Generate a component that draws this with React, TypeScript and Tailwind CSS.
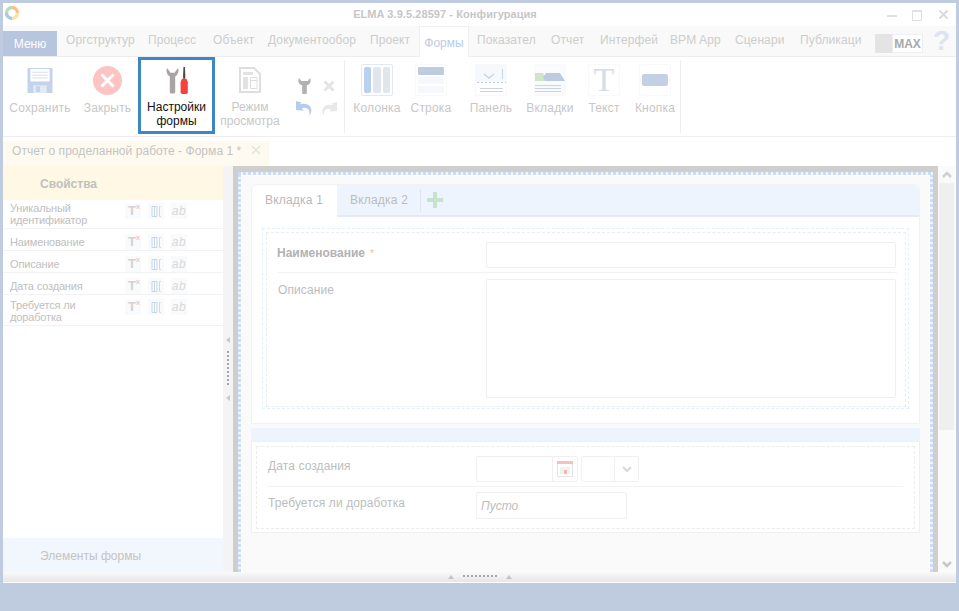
import React from "react";

const FONT = "[font-family:'Liberation_Sans',Arial,sans-serif]";

function Logo() {
  return (
    <svg width="16" height="18" viewBox="0 0 16 18" className="mt-[1px] ml-[1px]">
      <path d="M8 3.500A5.500 5.500 0 0 1 13.500 9" fill="none" stroke="#f7c28e" strokeWidth="3.400" />
      <path d="M13.500 9A5.500 5.500 0 0 1 8 14.500" fill="none" stroke="#f5e6a2" strokeWidth="3.400" />
      <path d="M8 14.500A5.500 5.500 0 0 1 2.500 9" fill="none" stroke="#a9c8ee" strokeWidth="3.400" />
      <path d="M2.500 9A5.500 5.500 0 0 1 8 3.500" fill="none" stroke="#b5e0b0" strokeWidth="3.400" />
    </svg>
  );
}

function TopTab({ label, w }: { label: string; w: string }) {
  return <div className={`${w} shrink-0 pt-[7px] text-[12px] leading-[14px] text-[#cdcdcd] tracking-[0.1px]`}>{label}</div>;
}

function Floppy() {
  return (
    <svg width="26" height="25" viewBox="0 0 26 26">
      <path d="M0 0h26v26H0z" fill="#c3d3e9" />
      <path d="M3 1h20v13H3z" fill="#fff" />
      <path d="M5 4h16v1H5zM5 7h16v1H5zM5 10h16v1H5z" fill="#d6e0ee" />
      <path d="M6 18h14v8H6z" fill="#e4eaf3" />
      <path d="M9 19h4v6H9z" fill="#c3d3e9" />
    </svg>
  );
}

function CloseRound() {
  return (
    <svg width="29" height="29" viewBox="0 0 29 29">
      <circle cx="14.500" cy="14.500" r="14.500" fill="#fcc5c3" />
      <path d="M8.500 8.500l12 12M20.500 8.500l-12 12" stroke="#fff" strokeWidth="3" />
    </svg>
  );
}

function Tools() {
  return (
    <svg width="22" height="27" viewBox="0 0 24 30">
      <path d="M1 1.500C0 3 0 7 2.500 9.500L4 10.500V28a1.500 1.500 0 0 0 1.500 1.500h3A1.500 1.500 0 0 0 10 28V10.500l1.500-1C14 7 14 3 13 1.500L10.500 4.500 9.500 6.500h-5L3.500 4.500z" fill="#a8a4a3" />
      <path d="M19.200 0h1.600l.4 8.500V13h-2.400V8.500z" fill="#4a4644" />
      <path d="M17.500 13h5L24 17v11a2 2 0 0 1-2 2h-4a2 2 0 0 1-2-2V17z" fill="#f4433a" />
    </svg>
  );
}

function DocView() {
  return (
    <svg width="22" height="26" viewBox="0 0 22 26">
      <path d="M1 1h14l6 6v18H1z" fill="#fff" stroke="#dedede" strokeWidth="2" />
      <path d="M4 5h10v3H4zM4 10h5v12H4z" fill="#e2e2e2" />
      <path d="M11.500 10.500h6.500v11h-6.500zM11.500 13.500h6.500" fill="none" stroke="#dedede" />
    </svg>
  );
}

function RibbonBtn({ w, label, icon }: { w: string; label: string; icon: React.ReactNode }) {
  return (
    <div className={`${w} shrink-0 flex flex-col items-center`}>
      <div className="h-[32px] mt-[7px] flex items-center justify-center">{icon}</div>
      <div className="mt-[5px] text-[12px] leading-[14px] text-center text-[#c7c7c7] tracking-[0.2px] whitespace-pre">{label}</div>
    </div>
  );
}

function Tile({ children, active }: { children: React.ReactNode; active?: boolean }) {
  return (
    <div className={`w-[32px] h-[32px] rounded-[2px] border ${active ? "border-[#dfe8f4]" : "border-[#f8f9fb]"} flex flex-col items-stretch`}>
      {children}
    </div>
  );
}

function Sep() {
  return <div className="w-[1px] h-[73px] mt-[3px] bg-[#eeeeee] shrink-0" />;
}

function SmallIcons() {
  return (
    <div className="w-[59px] shrink-0 pt-[17px] pl-[7px] grid grid-cols-[24px_26px] grid-rows-[23px_23px] items-center justify-items-center">
      <svg width="13" height="16" viewBox="0 0 14 17">
        <path d="M1 0C0 2 0 5 2 6.500L4.500 8v8a1 1 0 0 0 1 1h3a1 1 0 0 0 1-1V8L12 6.500C14 5 14 2 13 0L10.500 3h-7z" fill="#b2b0b0" />
      </svg>
      <svg width="12" height="12" viewBox="0 0 12 12">
        <path d="M1.500 1.500l9 9M10.500 1.500l-9 9" stroke="#e4e4e4" strokeWidth="3" />
      </svg>
      <svg width="16" height="15" viewBox="0 0 16 15">
        <path d="M0 0l5.500 1.500-1.500 1.800C7 2.300 10 2.500 12.500 4 16 6.500 16.500 11 13 15c1-3.500.5-6-2-7.500-2-1-4-1-5 .5l2 1.800L0 9z" fill="#b5cdea" />
      </svg>
      <svg width="15" height="14" viewBox="0 0 15 14">
        <path d="M15 0l-5.500 1.500 1.500 1.800C8 2.300 5 2.500 3 4 0 6.500-.5 10 2 14c-.5-3-.1-5 2-6.500 2-1 4-1 5 .5l-2 1.800L15 9z" fill="#e8e8e8" />
      </svg>
    </div>
  );
}

function RowIcons({ top }: { top: string }) {
  return (
    <div className={`absolute left-[122px] ${top} flex gap-[7px]`}>
      <div className="w-[16px] h-[16px] bg-[#f9fafc] relative">
        <span className="absolute left-[3px] top-0 text-[13px] leading-[16px] font-bold text-[#d3d3d3]">T</span>
        <span className="absolute left-[11px] -top-[1px] text-[8px] leading-[10px] text-[#f5b5b5]">x</span>
      </div>
      <div className="w-[16px] h-[16px] bg-[#f9fafc] flex items-center justify-center">
        <svg width="11" height="11" viewBox="0 0 11 11">
          <path d="M1 .5h5v10H1zM3.500 .5v10" fill="none" stroke="#c8d6ea" />
          <path d="M10 .5H8.500v10H10" fill="none" stroke="#d8d8d8" />
        </svg>
      </div>
      <div className="w-[16px] h-[16px] bg-[#f9fafc] flex items-center justify-center italic text-[12px] leading-[16px] text-[#d9d9d9] tracking-[0.5px]">ab</div>
    </div>
  );
}

function SideRow({ label, h, pt, top }: { label: string; h: string; pt: string; top: string }) {
  return (
    <div className={`${h} ${pt} relative border-b border-[#f2f2f2] pl-[7px] text-[11px] leading-[12px] tracking-[-0.15px] text-[#c0c0c0] whitespace-pre`}>
      {label}
      <RowIcons top={top} />
    </div>
  );
}

function Input({ className = "", children }: { className?: string; children?: React.ReactNode }) {
  return <div className={`border border-[#f0f0f0] rounded-[2px] bg-white ${className}`}>{children}</div>;
}

export default function App() {
  return (
    <div className={`w-[959px] h-[611px] bg-[#bfcbdf] overflow-hidden pt-[3px] pl-[3px] pr-[3px] ${FONT}`}>
      <div className="h-[580px] bg-white flex flex-col">
        {/* title */}
        <div className="h-[23px] shrink-0 relative flex items-center justify-center">
          <div className="absolute left-0 top-0"><Logo /></div>
          <div className="text-[11px] font-bold text-[#c6c6c6] tracking-[0.07px] pr-[69px]">ELMA 3.9.5.28597 - Конфигурация</div>
          <div className="absolute left-[884px] top-0 h-[23px] flex items-center">
            <div className="w-[10px] h-[2px] mt-[2px] bg-[#e0e0e0]" />
            <div className="w-[10px] h-[11px] ml-[15px] mt-[1px] border border-t-2 border-[#e0e0e0]" />
            <svg width="12" height="12" viewBox="0 0 12 12" className="ml-[16px]"><path d="M1.500 1.500l8 8M9.500 1.500l-8 8" stroke="#d9d9d9" strokeWidth="1.800" /></svg>
          </div>
        </div>
        {/* tabs */}
        <div className="h-[31px] shrink-0 bg-[#f9f9f9] border-b border-[#ededed] flex relative">
          <div className="w-[54px] h-[25px] mt-[5px] bg-[#b7c6de] text-white text-[12px] leading-[26px] text-center shrink-0">Меню</div>
          <div className="w-[9px] shrink-0" />
          <TopTab label="Оргструктур" w="w-[82px]" />
          <TopTab label="Процесс" w="w-[65px]" />
          <TopTab label="Объект" w="w-[55px]" />
          <TopTab label="Документообор" w="w-[102px]" />
          <TopTab label="Проект" w="w-[49px]" />
          <div className="w-[50px] h-[31px] shrink-0 bg-white border-x border-t border-[#efefef] text-center pt-[9px] text-[12px] leading-[14px] text-[#bccce2]">Формы</div>
          <div className="w-[8px] shrink-0" />
          <TopTab label="Показател" w="w-[74px]" />
          <TopTab label="Отчет" w="w-[49px]" />
          <TopTab label="Интерфей" w="w-[70px]" />
          <TopTab label="BPM App" w="w-[65px]" />
          <TopTab label="Сценари" w="w-[65px]" />
          <TopTab label="Публикаци" w="w-[75px]" />
          <div className="w-[48px] h-[19px] mt-[8px] shrink-0 bg-[#e4e4e4] flex justify-end">
            <div className="w-[31px] h-[19px] bg-white border border-[#eeeeee] text-[12px] leading-[19px] font-bold text-center text-[#a9a9a9]">MAX</div>
          </div>
          <div className="ml-[10px] mt-[0px] text-[28px] leading-[30px] font-bold text-[#dbe4f0]">?</div>
        </div>
        {/* ribbon */}
        <div className="h-[80px] shrink-0 border-b border-[#eeeeee] flex">
          <RibbonBtn w="w-[74px]" label="Сохранить" icon={<Floppy />} />
          <RibbonBtn w="w-[61px]" label="Закрыть" icon={<CloseRound />} />
          <div className="w-[77px] h-[77px] shrink-0 border-[3px] border-[#3f86c4] flex flex-col items-center">
            <div className="mt-[7px] h-[29px]"><Tools /></div>
            <div className="mt-[4px] text-[12px] leading-[14px] text-center text-[#111]">Настройки<br />формы</div>
          </div>
          <div className="w-[70px] shrink-0 flex flex-col items-center">
            <div className="h-[32px] mt-[7px] flex items-center justify-center"><DocView /></div>
            <div className="mt-[4px] text-[12px] leading-[14px] text-center text-[#c7c7c7]">Режим<br />просмотра</div>
          </div>
          <SmallIcons />
          <Sep />
          <div className="w-[4px] shrink-0" />
          <RibbonBtn w="w-[56px]" label="Колонка" icon={
            <Tile active>
              <div className="flex gap-[2px] h-full p-[2px]">
                <div className="flex-1 rounded-[2px] bg-[#b9d0f0]" />
                <div className="flex-1 rounded-[2px] bg-[#e1e6ec]" />
                <div className="flex-1 rounded-[2px] bg-[#e1e6ec]" />
              </div>
            </Tile>} />
          <RibbonBtn w="w-[52px]" label="Строка" icon={
            <Tile>
              <div className="h-full flex flex-col gap-[1px] p-[2px]">
                <div className="h-[8px] rounded-[1px] bg-[#bfcce0]" />
                <div className="h-[7px] mt-[1px] bg-[#f5f8fc]" />
                <div className="h-[7px] mt-[1px] bg-[#f5f8fc]" />
              </div>
            </Tile>} />
          <RibbonBtn w="w-[68px]" label="Панель" icon={
            <Tile>
              <svg width="30" height="30" viewBox="0 0 30 30">
                <path d="M0 0h30v17H0z" fill="#f5f8fc" />
                <path d="M8 9l5 4 5-4" fill="none" stroke="#c9d5e6" strokeWidth="1.500" />
                <path d="M26.500 4v10" stroke="#c9d5e6" />
                <path d="M1 17.500h29" stroke="#bccbe0" strokeDasharray="2 2" />
                <path d="M4 23.500h23M4 26.500h23" stroke="#c9d5e6" />
              </svg>
            </Tile>} />
          <RibbonBtn w="w-[50px]" label="Вкладки" icon={
            <Tile>
              <svg width="30" height="30" viewBox="0 0 30 30">
                <path d="M0 0h30v30H0z" fill="#fafbfd" />
                <path d="M0 8h8l4 8H0z" fill="#cfe6c6" />
                <path d="M11 8h14l5 8H10l-2-4z" fill="#bccbe0" />
                <path d="M0 20.500h26M0 23.500h26M0 26.500h26" stroke="#c9d5e6" />
              </svg>
            </Tile>} />
          <RibbonBtn w="w-[58px]" label="Текст" icon={
            <Tile>
              <div className="h-[30px] text-center text-[34px] leading-[30px] text-[#d3ddec] [font-family:'Liberation_Serif',serif]">T</div>
            </Tile>} />
          <RibbonBtn w="w-[44px]" label="Кнопка" icon={
            <Tile>
              <div className="mx-[2px] mt-[9px] h-[12px] rounded-[2px] bg-[#c4d1e5]" />
            </Tile>} />
          <div className="w-[3px] shrink-0" />
          <Sep />
        </div>
        {/* doc tab strip */}
        <div className="h-[29px] shrink-0 flex pt-[4px]">
          <div className="w-[266px] h-[25px] bg-[#fffaf0] flex pl-[9px] text-[12px] leading-[20px] text-[#c4c4c4]">
            <span className="tracking-[0.05px]">Отчет о проделанной работе - Форма 1 *</span>
            <svg width="10" height="10" viewBox="0 0 10 10" className="ml-[10px] mt-[4px]"><path d="M1 1l8 8M9 1L1 9" stroke="#e2e2e2" strokeWidth="1.500" /></svg>
          </div>
        </div>
        {/* main */}
        <div className="flex-1 flex min-h-0">
          <aside className="w-[220px] shrink-0 flex flex-col">
            <div className="h-[34px] shrink-0 bg-[#fef8e4] pl-[37px] text-[12px] leading-[37px] font-bold text-[#c0c0c0]">Свойства</div>
            <SideRow h="h-[29px]" pt="pt-[2px]" top="top-[3px]" label={"Уникальный\nидентификатор"} />
            <SideRow h="h-[22px]" pt="pt-[7px]" top="top-[5px]" label="Наименование" />
            <SideRow h="h-[22px]" pt="pt-[7px]" top="top-[5px]" label="Описание" />
            <SideRow h="h-[22px]" pt="pt-[7px]" top="top-[5px]" label="Дата создания" />
            <SideRow h="h-[31px]" pt="pt-[4px]" top="top-[4px]" label={"Требуется ли\nдоработка"} />
            <div className="flex-1" />
            <div className="h-[34px] shrink-0 bg-[#f2f6fd] pl-[37px] text-[12px] leading-[37px] text-[#c4c4c4]">Элементы формы</div>
          </aside>
          <div className="w-[10px] shrink-0 bg-[#f4f4f4] flex flex-col items-center pt-[171px]">
            <div className="w-0 h-0 border-y-[3px] border-y-transparent border-r-[4px] border-r-[#c9c9c9]" />
            <div className="w-[2px] h-[34px] mt-[8px] mb-[10px] border-l-2 border-dotted border-[#a6a6a6]" />
            <div className="w-0 h-0 border-y-[3px] border-y-transparent border-r-[4px] border-r-[#c9c9c9]" />
          </div>
          <div className="w-[705px] shrink-0 bg-[#cecece] pt-[6px] px-[5px]">
            <div className="h-full p-[3px] pb-0 [background:repeating-linear-gradient(90deg,#c9dcf8_0_3px,#f2f5fa_3px_5px)_top/100%_3px_no-repeat,repeating-linear-gradient(0deg,#c9dcf8_0_3px,#f2f5fa_3px_5px)_left/3px_100%_no-repeat,repeating-linear-gradient(0deg,#c9dcf8_0_3px,#f2f5fa_3px_5px)_right/3px_100%_no-repeat]">
              <div className="h-full bg-[#fafafa] border-t border-x border-white pt-[8px] pl-[9px] pr-[9px]">
                <div className="rounded-t-[6px] border border-[#f2f2f2] bg-white">
                  <div className="h-[32px] flex bg-[#eef4fd] border-b-2 border-[#e6ebf3] rounded-t-[6px]">
                    <div className="w-[85px] h-[32px] bg-white rounded-tl-[6px] text-[12px] leading-[30px] pl-[13px] text-[#b8b8b8] tracking-[0.2px]">Вкладка 1</div>
                    <div className="w-[83px] text-[12px] leading-[30px] pl-[13px] text-[#bdbdbd] tracking-[0.2px]">Вкладка 2</div>
                    <div className="w-[1px] h-[23px] mt-[4px] bg-[#e1e6ee]" />
                    <svg width="16" height="16" viewBox="0 0 16 16" className="ml-[6px] mt-[7px]"><path d="M8 0v16M0 8h16" stroke="#c6e4cd" strokeWidth="4" /></svg>
                  </div>
                  <div className="px-[10px] pt-[11px] pb-[14px]">
                    <div className="border border-dashed border-[#e2f0f8] p-[3px] pr-[2px] pb-[1px]">
                      <div className="border border-dashed border-[#ececec] h-[175px] pl-[10px] pr-[8px] pt-[9px]">
                        <div className="h-[31px] border-b border-[#f2f2f2] flex">
                          <div className="w-[209px] text-[12px] leading-[23px] font-bold text-[#b2b2b2]">
                            Наименование
                            <span className="ml-[5px] font-normal text-[#f4b6b6] text-[10px]">*</span>
                          </div>
                          <Input className="w-[410px] h-[26px]" />
                        </div>
                        <div className="flex pt-[6px]">
                          <div className="w-[209px] pl-[1px] text-[12px] leading-[22px] text-[#bcbcbc] tracking-[0.1px]">Описание</div>
                          <Input className="w-[410px] h-[119px]" />
                        </div>
                      </div>
                    </div>
                  </div>
                </div>
                <div className="h-[13px] mt-[4px] bg-[#eef4fd]" />
                <div className="border border-[#f0f0f0] bg-white p-[4px] pb-[3px]">
                  <div className="border border-dashed border-[#ececec] h-[83px] px-[11px] pt-[9px]">
                    <div className="h-[31px] border-b border-[#f2f2f2] flex">
                      <div className="w-[208px] text-[12px] leading-[21px] text-[#bdbdbd] tracking-[0.1px]">Дата создания</div>
                      <Input className="w-[102px] h-[26px] flex">
                        <div className="w-[76px] border-r border-[#f0f0f0]" />
                        <div className="flex-1 flex items-center justify-center">
                          <svg width="16" height="16" viewBox="0 0 16 16">
                            <path d="M.5.5h15v15H.5z" fill="#fff" stroke="#e4e4e4" />
                            <path d="M0 0h16v3H0z" fill="#f6c1bb" />
                            <path d="M3 6h10v7H3z" fill="#f1f1f1" />
                            <path d="M7 9h3v4H7z" fill="#f6b5ae" />
                          </svg>
                        </div>
                      </Input>
                      <Input className="w-[58px] h-[26px] ml-[3px] flex">
                        <div className="w-[33px] border-r border-[#f0f0f0]" />
                        <div className="flex-1 flex items-center justify-center">
                          <svg width="10" height="7" viewBox="0 0 10 7"><path d="M1 1l4 4 4-4" fill="none" stroke="#d8d8d8" strokeWidth="2" /></svg>
                        </div>
                      </Input>
                    </div>
                    <div className="flex pt-[5px]">
                      <div className="w-[208px] text-[12px] leading-[22px] text-[#bdbdbd] tracking-[0.1px]">Требуется ли доработка</div>
                      <Input className="w-[151px] h-[27px] pl-[4px] italic text-[12px] leading-[26px] text-[#bdbdbd]">Пусто</Input>
                    </div>
                  </div>
                </div>
              </div>
            </div>
          </div>
          <div className="w-[17px] shrink-0 bg-[#fafafa] flex flex-col items-center">
            <svg width="10" height="8" viewBox="0 0 10 8" className="mt-[5px]"><path d="M1 6l4-4 4 4" fill="none" stroke="#d0d0d0" strokeWidth="2.500" /></svg>
            <div className="w-[15px] h-[247px] mt-[4px] bg-[#efefef]" />
            <div className="flex-1" />
            <svg width="10" height="8" viewBox="0 0 10 8" className="mb-[4px]"><path d="M1 2l4 4 4-4" fill="none" stroke="#c8c8c8" strokeWidth="2.500" /></svg>
          </div>
        </div>
        {/* bottom splitter */}
        <div className="h-[10px] shrink-0 bg-gradient-to-b from-[#fafafa] to-[#e6e6e6] flex justify-center gap-[9px] items-start pt-[2px]">
          <div className="mt-[1px] w-0 h-0 border-x-[3px] border-x-transparent border-b-[4px] border-b-[#c4c4c4]" />
          <div className="w-[34px] mt-[1px] border-t-2 border-dotted border-[#a8a8a8]" />
          <div className="mt-[1px] w-0 h-0 border-x-[3px] border-x-transparent border-b-[4px] border-b-[#c4c4c4]" />
        </div>
        <div className="h-[1px] shrink-0 bg-white" />
      </div>
    </div>
  );
}
